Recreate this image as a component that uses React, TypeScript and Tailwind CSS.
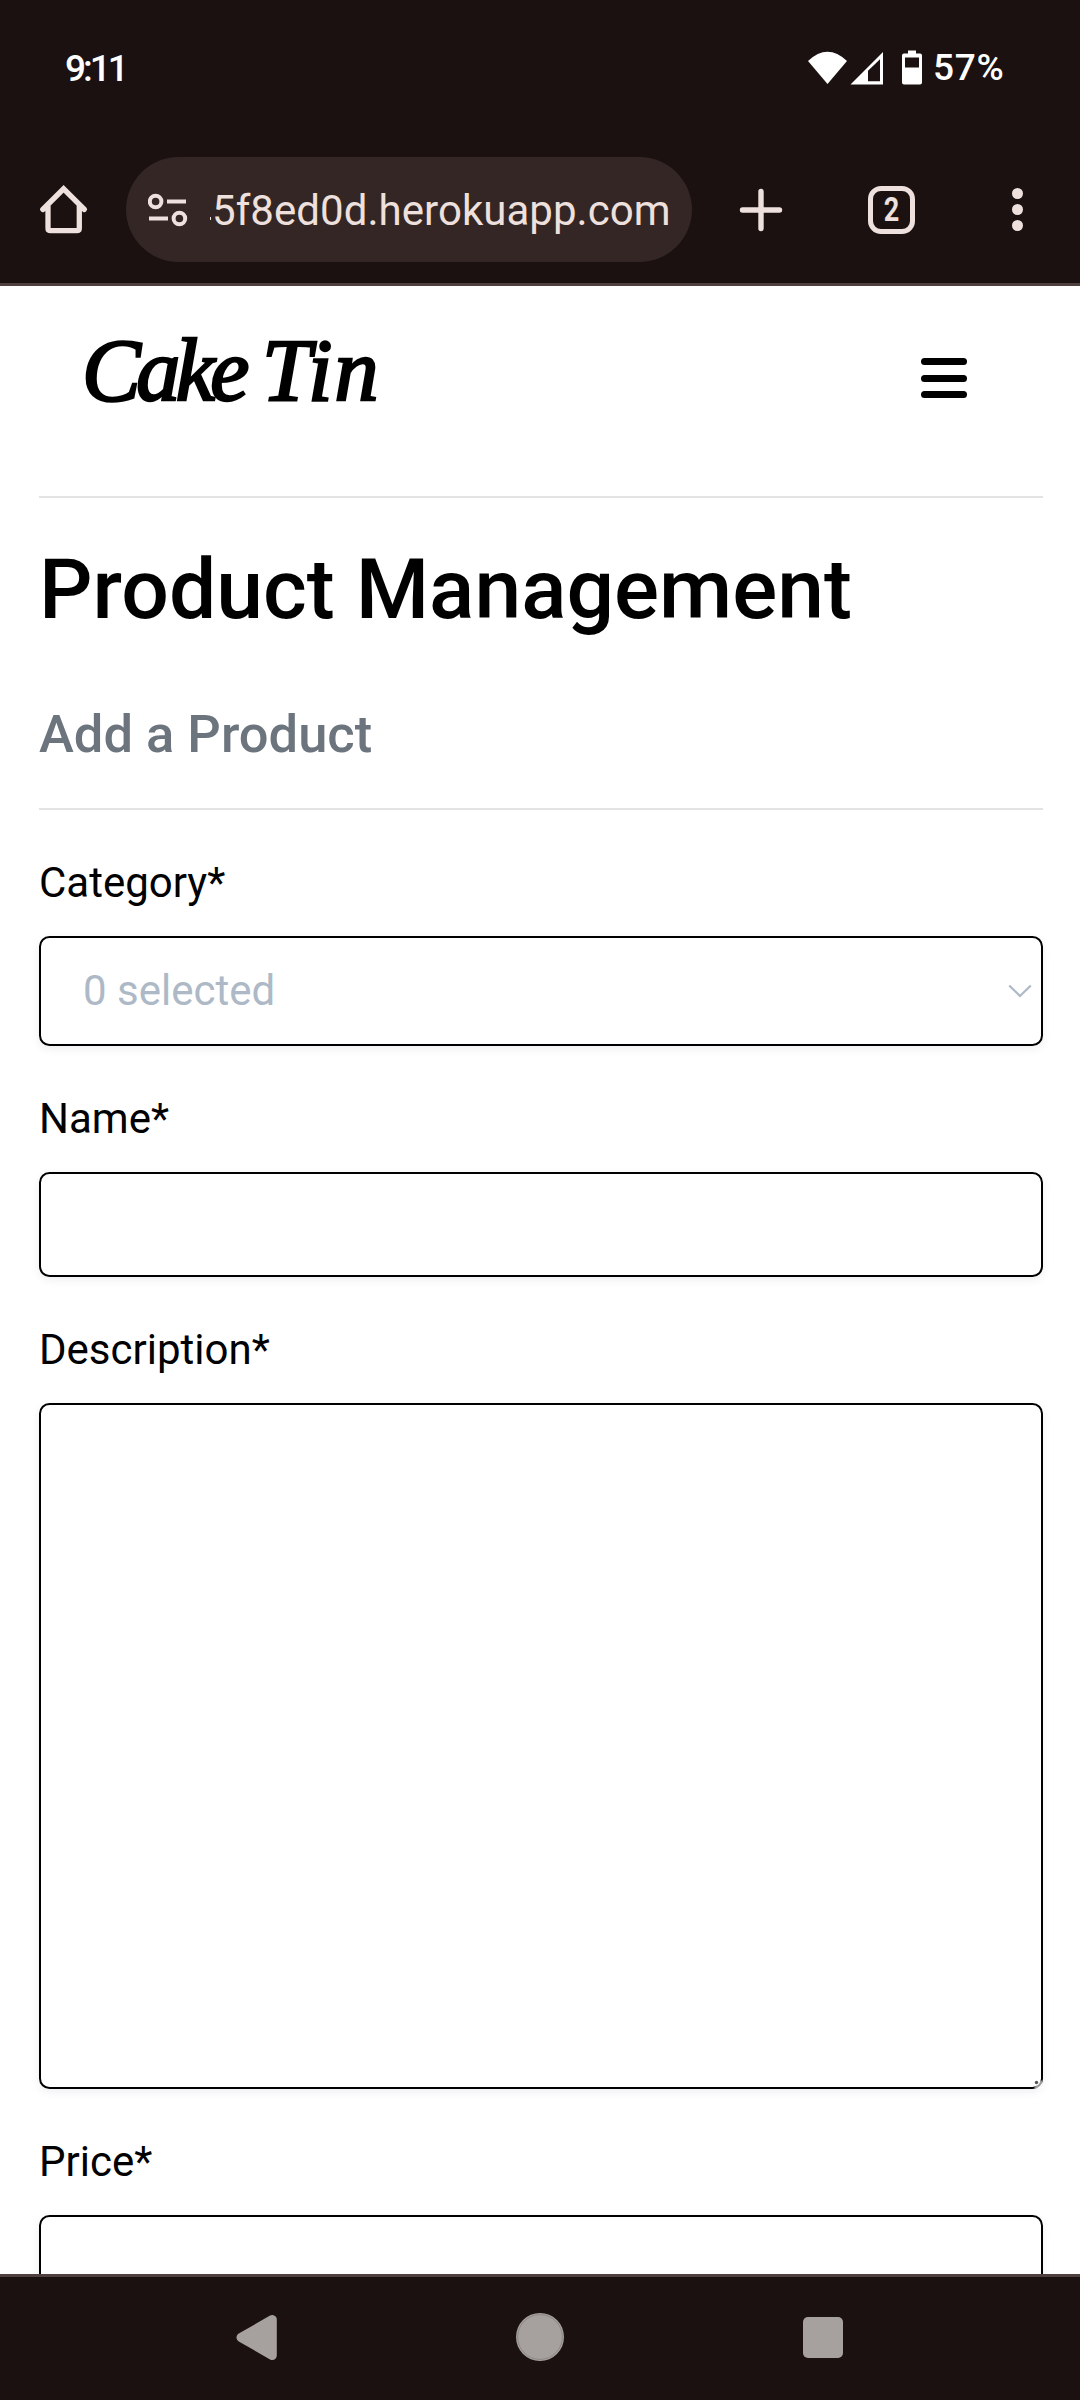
import type { ReactNode } from "react";

function StatusBar() {
  return (
    <div className="flex h-[136px] items-center justify-between pl-[65px] pr-[76px] text-white">
      <span className="mt-px font-['Roboto'] text-[37px] font-medium leading-[44px] tracking-[-3px]">9:11</span>
      <div className="flex items-center">
        <svg width="122" height="40" viewBox="804 47.5 122 40" className="block">
          <path d="M808 60.5Q827.5 42 847 60.5L827.5 83.5Z" fill="#fff" />
          <path fillRule="evenodd" d="M850.5 84L883 51.5V84ZM868 70.3V80.7H880V58.8Z" fill="#fff" />
          <path
            fillRule="evenodd"
            d="M908 50H916V53H920Q922 53 922 55V82Q922 84 920 84H904Q902 84 902 82V55Q902 53 904 53H908ZM905 57V67H919V57Z"
            fill="#fff"
          />
        </svg>
        <span className="ml-[7px] w-[71px] whitespace-nowrap font-['Roboto'] text-[37px] font-medium leading-[44px] tracking-[0.7px]">
          57%
        </span>
      </div>
    </div>
  );
}

function BrowserBar() {
  return (
    <div className="flex h-[150px] items-start border-b-[3px] border-[#4d403f] pt-[21px]">
      <svg width="126" height="105" viewBox="0 157 126 105" fill="none" stroke="#eee0dd" className="block shrink-0">
        <path d="M42.8 209.5L63.6 188.8L84.4 209.5M48 205V228.2Q48 230.7 50.5 230.7H76.8Q79.3 230.7 79.3 228.2V205" strokeWidth="5.3" strokeLinecap="round" strokeLinejoin="miter" />
      </svg>
      <div className="flex h-[105px] w-[566px] shrink-0 items-center rounded-full bg-[#342624] pl-[22px]">
        <svg width="40" height="36" viewBox="148 191.5 40 36" fill="none" stroke="#eee0dd" strokeWidth="4" className="block">
          <circle cx="155.6" cy="201" r="5.8" />
          <path d="M167 201H186M149 218H168" />
          <circle cx="179.4" cy="218" r="5.8" />
        </svg>
        <div className="ml-[22px] mt-[3px] flex h-[60px] w-[462px] items-center overflow-hidden">
          <span className="mt-[14px] h-[3px] w-px bg-[#eee0dd]" />
          <span className="ml-px whitespace-nowrap font-['Roboto'] text-[42px] leading-[60px] text-[#eee0dd] tracking-[0.05px]">
            5f8ed0d.herokuapp.com
          </span>
        </div>
      </div>
      <div className="flex h-[105px] grow items-center">
        <svg width="44" height="44" viewBox="0 0 44 44" className="ml-[47px] block" stroke="#eee0dd" strokeWidth="5.4" strokeLinecap="round">
          <path d="M22 3.5V40.5M3.5 22H40.5" />
        </svg>
        <div className="ml-[85px] flex h-[48px] w-[47px] items-center justify-center rounded-[13px] border-[5px] border-[#eee0dd] font-['Roboto'] text-[33px] font-bold leading-none text-[#eee0dd]">
          <span className="inline-block scale-x-[0.82]">2</span>
        </div>
        <div className="ml-[97px] flex flex-col gap-[5px]">
          <i className="block size-[11px] rounded-full bg-[#eee0dd]" />
          <i className="block size-[11px] rounded-full bg-[#eee0dd]" />
          <i className="block size-[11px] rounded-full bg-[#eee0dd]" />
        </div>
      </div>
    </div>
  );
}

function SiteHeader() {
  return (
    <header className="flex h-[212px] items-start justify-between border-b-2 border-[#e3e3e3] pl-[43px] pr-[76px]">
      <span className="mt-[35px] flex whitespace-pre font-['Liberation_Serif',cursive] text-[88px] italic leading-[100px] text-black [-webkit-text-stroke:2.5px_#000]">
        <span className="w-[180px] tracking-[-4.5px]">{"Cake "}</span>
        <span className="tracking-[2px]">Tin</span>
      </span>
      <div className="mt-[72px] flex flex-col gap-[9.5px]">
        <i className="block h-[7px] w-[46px] rounded-full bg-black" />
        <i className="block h-[7px] w-[46px] rounded-full bg-black" />
        <i className="block h-[7px] w-[46px] rounded-full bg-black" />
      </div>
    </header>
  );
}

function Field({ label, box, children }: { label: string; box: string; children?: ReactNode }) {
  return (
    <div className="mt-[41px]">
      <div className="text-[42px] leading-[63px] text-black">{label}</div>
      <div
        className={
          "relative mt-[22px] flex items-center justify-between rounded-[10.5px] border-2 border-black bg-white shadow-[0_3px_8px_rgba(50,50,93,0.08)] " +
          box
        }
      >
        {children}
      </div>
    </div>
  );
}

function NavBar() {
  return (
    <div className="flex h-[126px] shrink-0 items-start border-t-[3px] border-[#4d403f] bg-[#1a1110] pt-[35px]">
      <svg width="50" height="50" viewBox="232 2312 50 50" className="ml-[232px] block">
        <path d="M241 2337.5L272.3 2319.5V2355.5Z" fill="#a6a19f" stroke="#a6a19f" strokeWidth="9" strokeLinejoin="round" />
      </svg>
      <svg width="50" height="50" viewBox="0 0 50 50" className="ml-[233px] block">
        <circle cx="25" cy="25" r="24" fill="#a6a19f" />
        <circle cx="25" cy="25" r="22.4" fill="none" stroke="#85807f" strokeWidth="0.8" />
      </svg>
      <div className="ml-[237.5px] mt-[5px] h-[41px] w-[40px] rounded-[5px] bg-[#a6a19f]" />
    </div>
  );
}

export default function App() {
  return (
    <div className="flex h-[2400px] w-[1080px] flex-col overflow-hidden bg-white font-['Roboto',sans-serif]">
      <div className="shrink-0 bg-[#1a1110]">
        <StatusBar />
        <BrowserBar />
      </div>
      <main className="h-[1988px] shrink-0 overflow-hidden pl-[39px] pr-[37px]">
        <SiteHeader />
        <h1 className="mt-[42px] whitespace-nowrap text-[84px] font-medium leading-[100px] text-black">Product Management</h1>
        <h2 className="mt-[63px] text-[52.5px] font-medium leading-[63px] text-[#6c757d]">Add a Product</h2>
        <div className="mt-[42px] h-[2px] bg-[#e3e3e3]" />
        <Field label="Category*" box="h-[110px] pl-[42px] pr-[9px]">
          <span className="-mt-[2px] text-[42px] leading-[63px] text-[#adb9c6]">0 selected</span>
          <svg width="24" height="14" viewBox="0 0 24 14" fill="none" stroke="#adb9c6" strokeWidth="2.2" className="-mt-px block">
            <path d="M1.2 1.5L12 12L22.8 1.5" />
          </svg>
        </Field>
        <Field label="Name*" box="h-[105px]" />
        <Field label="Description*" box="h-[686px]">
          <svg width="8" height="8" viewBox="0 0 8 8" className="absolute -bottom-px -right-px block">
            <path d="M0 8L8 0V8Z" fill="#fff" fillOpacity="0.6" />
            <circle cx="2.5" cy="2.5" r="1.7" fill="#555" />
          </svg>
        </Field>
        <Field label="Price*" box="h-[105px]" />
      </main>
      <NavBar />
    </div>
  );
}
